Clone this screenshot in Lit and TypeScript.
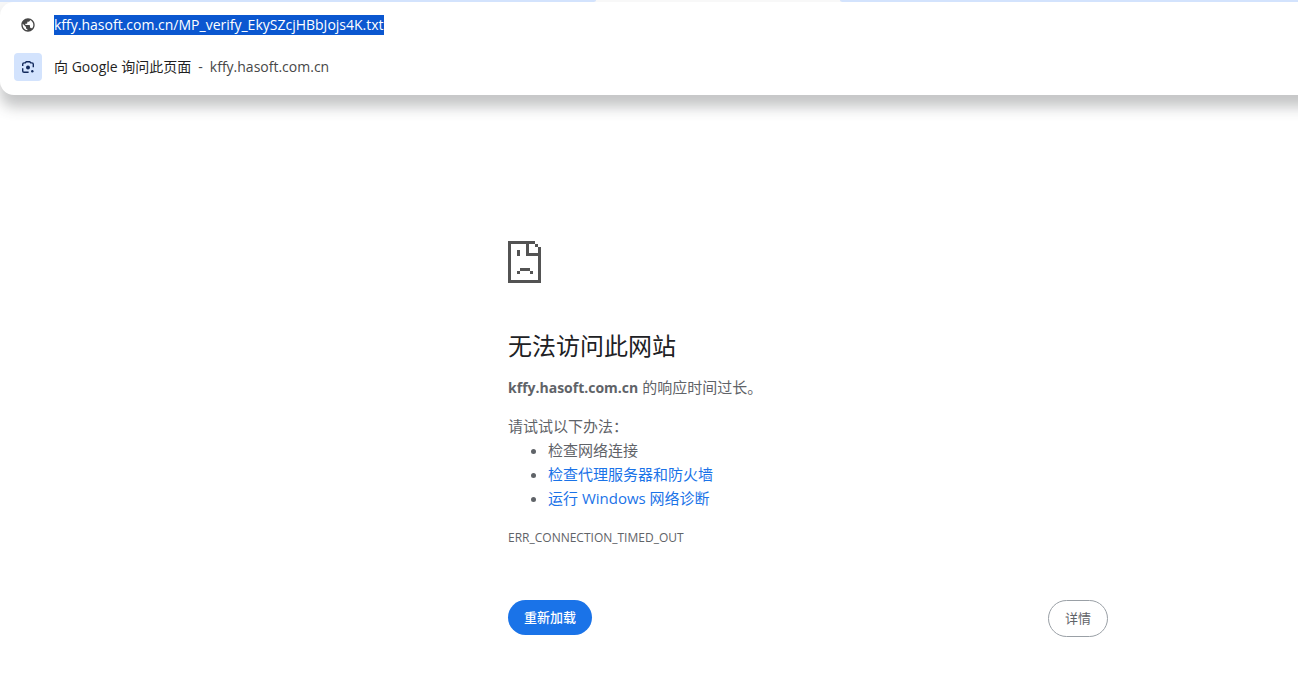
import { LitElement, html, css } from "lit";
import { customElement, property, query } from "lit/decorators.js";

@customElement("omnibox-popup")
class OmniboxPopup extends LitElement {
  @property() url = "";
  @property() host = "";
  @query("input") field!: HTMLInputElement;

  static styles = css`
    :host {
      display: block;
      background: #fff;
      border-radius: 14px 0 0 14px;
      box-shadow: 0 12px 14px rgba(60, 64, 67, 0.3);
      padding: 2px 0 7px 14px;
      font-size: 14px;
      line-height: 20px;
    }
    .row {
      display: flex;
      align-items: center;
      gap: 12px;
      height: 42px;
    }
    .icon {
      display: flex;
      align-items: center;
      justify-content: center;
      width: 28px;
      height: 28px;
      border-radius: 4px;
      flex: none;
    }
    .lens {
      background: #d3e3fd;
    }
    input {
      flex: 1;
      min-width: 0;
      height: 20px;
      border: 0;
      padding: 0;
      margin: 0;
      outline: 0;
      background: transparent;
      color: #1f1f1f;
      font: inherit;
    }
    input::selection {
      background: #0b57d0;
      color: #fff;
    }
    .suggestion {
      display: flex;
      gap: 7px;
      border: 0;
      padding: 0;
      background: none;
      font: inherit;
      color: #1f1f1f;
    }
    .dim {
      color: #474747;
    }
  `;

  firstUpdated() {
    this.field.focus();
    this.field.select();
  }

  render() {
    return html`
      <div class="row">
        <span class="icon">
          <svg width="16" height="16" viewBox="0 0 24 24" fill="#474747" aria-hidden="true">
            <path d="M12 2C6.48 2 2 6.48 2 12s4.48 10 10 10 10-4.48 10-10S17.52 2 12 2zM4 12c0-.61.08-1.21.21-1.78L8.99 15v1c0 1.1.9 2 2 2v1.93C7.06 19.43 4 16.07 4 12zm13.89 5.4c-.26-.81-1-1.4-1.9-1.4h-1v-3c0-.55-.45-1-1-1h-6v-2h2c.55 0 1-.45 1-1V7h2c1.1 0 2-.9 2-2v-.41C17.92 5.77 20 8.65 20 12c0 2.08-.81 3.98-2.11 5.4z" />
          </svg>
        </span>
        <input type="text" aria-label="地址栏" spellcheck="false" .value=${this.url} />
      </div>
      <div class="row">
        <span class="icon lens">
          <svg width="14" height="14" viewBox="0 0 14 14" fill="none" stroke="#12295c" stroke-width="1.4" aria-hidden="true">
            <path d="M1.7 6V4.3Q1.7 2.9 3.1 2.9H4.3L5.2 1.8H8.8L9.7 2.9h1.2Q12.3 2.9 12.3 4.3V7.2" />
            <path d="M1.7 8.2V10.9Q1.7 12.3 3.1 12.3H7.6" />
            <circle cx="7" cy="7.5" r="2" fill="#12295c" stroke="none" />
            <circle cx="11.3" cy="11.3" r="1.2" fill="#12295c" stroke="none" />
          </svg>
        </span>
        <button class="suggestion" type="button">
          <span>向 Google 询问此页面</span><span class="dim">-</span><span class="dim">${this.host}</span>
        </button>
      </div>
    `;
  }
}

@customElement("error-page")
class ErrorPage extends LitElement {
  @property() host = "";
  @property() code = "";

  static styles = css`
    :host {
      display: block;
      color: #5f6368;
      font-size: 15px;
      line-height: 24px;
    }
    .sad {
      display: block;
      margin-bottom: 45px;
    }
    h1 {
      margin: 0 0 11px;
      font-size: 24px;
      font-weight: 400;
      line-height: 36px;
      color: #202124;
    }
    p {
      margin: 0 0 14px;
    }
    strong {
      font-size: 14px;
    }
    .lead {
      margin: 0;
    }
    ul {
      margin: 0 0 16px;
      padding-left: 40px;
    }
    a {
      color: #1a73e8;
      text-decoration: none;
    }
    .code {
      margin: 0 0 50px;
      font-size: 12px;
    }
    .buttons {
      display: flex;
      justify-content: space-between;
      align-items: flex-start;
    }
    button {
      font: inherit;
      font-size: 13px;
      line-height: 19px;
      padding: 8px 16px;
      border-radius: 20px;
      border: 0;
    }
    .reload {
      background: #1a73e8;
      color: #fff;
      font-weight: 500;
    }
    .details {
      background: #fff;
      color: #5f6368;
      border: 1px solid #9aa0a6;
    }
  `;

  render() {
    return html`
      <svg class="sad" width="33" height="42" viewBox="0 0 33 42" fill="#535353" shape-rendering="crispEdges" aria-hidden="true">
        <path d="M0 0H27V3H30V6H33V42H0ZM3 3V39H30V15H18V3ZM21 3V12H30V6H27V3Z" fill-rule="evenodd" />
        <path d="M9 9h3v6H9zM12 27h10v3H12zM9 30h3v3H9zM22 30h3v3h-3z" />
      </svg>
      <h1>无法访问此网站</h1>
      <p><strong>${this.host}</strong> 的响应时间过长。</p>
      <p class="lead">请试试以下办法：</p>
      <ul>
        <li>检查网络连接</li>
        <li><a href="#proxy">检查代理服务器和防火墙</a></li>
        <li><a href="#diagnose">运行 Windows 网络诊断</a></li>
      </ul>
      <p class="code">${this.code}</p>
      <div class="buttons">
        <button class="reload" type="button">重新加载</button>
        <button class="details" type="button">详情</button>
      </div>
    `;
  }
}

@customElement("app-root")
class AppRoot extends LitElement {
  static styles = css`
    :host {
      display: block;
      min-height: 100vh;
      overflow-x: clip;
      background: #fff;
      font-family: "Open Sans", "Noto Sans CJK SC", sans-serif;
    }
    .top {
      background: linear-gradient(#f8f8f8 50%, #fff 50%);
    }
    .tabs {
      display: flex;
      justify-content: space-between;
      height: 2px;
    }
    .tabs span {
      background: #d3e3fd;
    }
    .before {
      flex: 596;
      border-bottom-right-radius: 4px 2px;
    }
    .active {
      flex: 244;
    }
    .tabs .active {
      background: #f8f8f8;
    }
    .after {
      flex: 458;
      border-bottom-left-radius: 4px 2px;
    }
    /* The popup runs on past the right edge, so its shadow stays even there. */
    omnibox-popup {
      margin-right: -24px;
    }
    main {
      display: grid;
      grid-template-columns: 508fr minmax(auto, 600px) 190fr;
      padding: 146px 0 40px;
    }
    error-page {
      grid-column: 2;
    }
  `;

  render() {
    return html`
      <div class="top">
        <div class="tabs">
          <span class="before"></span><span class="active"></span><span class="after"></span>
        </div>
        <omnibox-popup
          url="kffy.hasoft.com.cn/MP_verify_EkySZcjHBbJojs4K.txt"
          host="kffy.hasoft.com.cn"
        ></omnibox-popup>
      </div>
      <main>
        <error-page host="kffy.hasoft.com.cn" code="ERR_CONNECTION_TIMED_OUT"></error-page>
      </main>
    `;
  }
}
